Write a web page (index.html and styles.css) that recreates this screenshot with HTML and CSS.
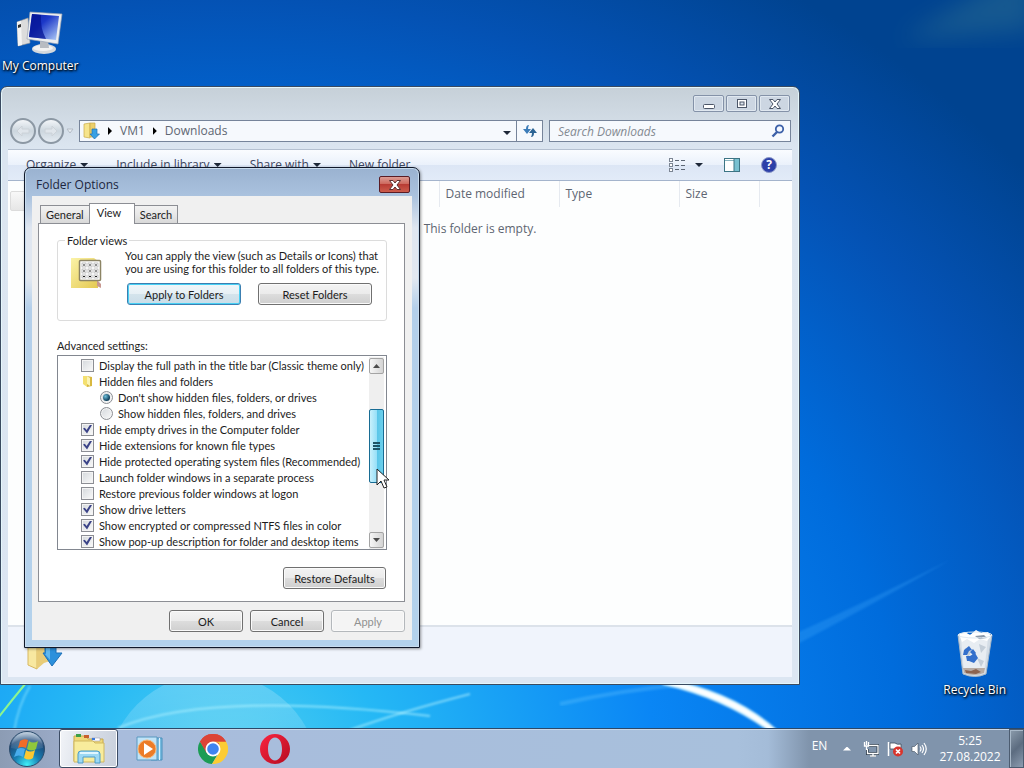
FILE: index.html
```html
<!DOCTYPE html>
<html lang="en">
<head>
    <meta charset="UTF-8">
    <meta name="viewport" content="width=device-width, initial-scale=1.0">
    <title>Folder Options</title>
    <link rel="stylesheet" href="styles.css">
</head>
<body>
    <main class="desktop">
        <!-- Wallpaper light streaks -->
        <svg class="wallpaper" viewBox="0 0 1024 768" preserveAspectRatio="none" aria-hidden="true">
            <defs>
                <filter id="soft"><feGaussianBlur stdDeviation="1"/></filter>
                <filter id="softer"><feGaussianBlur stdDeviation="12"/></filter>
                <linearGradient id="glow" x1="0" y1="0" x2="0" y2="1">
                    <stop offset="0" stop-color="#fff" stop-opacity=".22"/>
                    <stop offset=".5" stop-color="#fff" stop-opacity=".06"/>
                </linearGradient>
            </defs>
            <circle cx="213" cy="780" r="107" fill="url(#glow)"/>
            <path d="M900 40 L1034 -40 V30 Z" fill="#4a8a90" opacity=".3" filter="url(#softer)"/>
            <path d="M790 636 Q870 600 950 560 Q870 606 790 648Z" fill="#4ab0ff" opacity=".25" filter="url(#soft)"/>
            <path d="M560 704 Q620 690 690 684" fill="none" stroke="#6cc8ff" stroke-width="4" opacity=".3" filter="url(#soft)"/>
            <path d="M118 728 Q210 690 430 716" fill="none" stroke="#b8f4ff" stroke-width="2" opacity=".6" filter="url(#soft)"/>
            <path d="M350 730 Q400 712 470 694" fill="none" stroke="#b8f4ff" stroke-width="2" opacity=".6" filter="url(#soft)"/>
            <path d="M14 732 Q18 706 30 686" fill="none" stroke="#9cecff" stroke-width="2" opacity=".5" filter="url(#soft)"/>
            <path d="M-2 718 Q12 700 26 683" fill="none" stroke="#8cf590" stroke-width="2"/>
            <path d="M668 680 Q735 693 777 731 L770 731 Q725 698 664 684Z" fill="#fff" stroke="#d8f6ff" stroke-width="2" filter="url(#soft)"/>
        </svg>

        <a class="desktop-icon computer" href="#">
            <svg width="48" height="44" viewBox="0 0 48 44" aria-hidden="true">
                <defs>
                    <linearGradient id="screen" x1="0" y1="0" x2="1" y2="1">
                        <stop offset="0" stop-color="#0a1fa8"/><stop offset=".4" stop-color="#1c38c8"/><stop offset="1" stop-color="#b4d0f8"/>
                    </linearGradient>
                </defs>
                <path d="M1 12 L12 8 L14 33 L2 36Z" fill="#dcdcdc" stroke="#999" stroke-width=".6"/>
                <path d="M1 12 L5 11 L6 35 L2 36Z" fill="#f4f4f4"/>
                <path d="M2 15 l3 -1 v3 l-3 1z" fill="#333"/>
                <ellipse cx="28" cy="39" rx="12" ry="5" fill="#d4d8dc"/>
                <ellipse cx="27" cy="38" rx="10" ry="3" fill="#f2f2f2"/>
                <path d="M24 30 h8 l1 8 h-9z" fill="#b8bcc2"/>
                <path d="M14 2 L46 4 L42 34 L11 29Z" fill="#eceef0" stroke="#9aa4b4" stroke-width=".7"/>
                <path d="M16 4 L43 6 L40 30 L13 27Z" fill="url(#screen)"/>
                <path d="M16 4 L25 5 Q24 18 30 29 L13 27Z" fill="#041494" opacity=".75"/>
            </svg>
            <span>My Computer</span>
        </a>

        <a class="desktop-icon recycle" href="#">
            <svg width="40" height="48" viewBox="0 0 40 48" aria-hidden="true">
                <path d="M3 5 L8 44 Q20 49 31 44 L37 5Z" fill="#d4dde6" stroke="#a8b8c8"/>
                <path d="M6 8 L9 43 Q19 47 29 43 L33 8Z" fill="#e8edf2"/>
                <path d="M4 4 L10 2 L15 5 L21 0 L26 3 L33 2 L36 6 L32 11 L25 9 L19 13 L12 9 L7 12Z" fill="#fff"/>
                <path d="M20 6 l9 -1 3 3 -8 1z" fill="#8a98a8"/>
                <path d="M10 18 l6 4 -3 6zM24 14 l7 3 -5 6zM22 28 l7 3 -3 6z" fill="#c4ced8"/>
                <path d="M9 20 l5 -4 3 4 -3 1 -2 4 -4 0zM18 19 l3 4 -2 3 -4 -4zM15 26 l5 -3 3 5 -4 5 -5 -2zM11 26 l4 0 1 5 -4 0z" fill="#3470cc"/>
                <path d="M8 38 L30 38 L29 43 Q19 47 9 43Z" fill="#b8aca4"/>
                <path d="M10 40 l6 1 5 -2 5 3 -5 2 -10 -1z" fill="#8c6450"/>
                <ellipse cx="20" cy="5" rx="17" ry="3" fill="none" stroke="#dfe9f2"/>
            </svg>
            <span>Recycle Bin</span>
        </a>

        <section class="explorer" aria-label="Downloads">
            <div class="caption">
                <button class="cap-btn" aria-label="Minimize"><svg width="14" height="12" viewBox="0 0 14 12"><rect x="1.500" y="6.500" width="11" height="4" rx="1" fill="#fff" stroke="#4c5668"/></svg></button>
                <button class="cap-btn" aria-label="Restore"><svg width="12" height="12" viewBox="0 0 12 12"><rect x="1.500" y="1.500" width="9" height="8" fill="#fff" stroke="#4c5668"/><rect x="4" y="4" width="4" height="3" fill="#dde5ee" stroke="#4c5668"/></svg></button>
                <button class="cap-btn" aria-label="Close"><svg width="14" height="12" viewBox="0 0 14 12"><path d="M1.500 1.500h3.500l2 2.500 2-2.500h3.500L9 6l3.500 4.500H9L7 8l-2 2.500H1.500L5 6z" fill="#fff" stroke="#4c5668"/></svg></button>
            </div>

            <div class="nav-row">
                <div class="history">
                    <button class="round" aria-label="Back"><svg width="14" height="12" viewBox="0 0 14 12"><path d="M6 1L1 6l5 5V8h7V4H6z" fill="#dfe5eb" stroke="#ccd2d8"/></svg></button>
                    <button class="round" aria-label="Forward"><svg width="14" height="12" viewBox="0 0 14 12"><path d="M8 1l5 5-5 5V8H1V4h7z" fill="#dfe5eb" stroke="#ccd2d8"/></svg></button>
                    <svg width="8" height="6" viewBox="0 0 8 6" aria-hidden="true"><path d="M1 1h6L4 5z" fill="#e8edf2" stroke="#b4bcc6"/></svg>
                </div>
                <div class="address">
                    <svg width="18" height="18" viewBox="0 0 18 18" aria-hidden="true">
                        <path d="M2 2l6 -1v15l-6 -1z" fill="#f6e48c" stroke="#c8aa48" stroke-width=".7"/>
                        <path d="M8 1h5v14H8z" fill="#ecd06c" stroke="#c8aa48" stroke-width=".7"/>
                        <path d="M10 7h5v5h2.500L12.500 17 8 12h2z" fill="#38a0e4" stroke="#1c70b4" stroke-width=".7"/>
                    </svg>
                    <span class="tri-right"></span>
                    <a href="#">VM1</a>
                    <span class="tri-right"></span>
                    <a href="#">Downloads</a>
                    <button class="drop" aria-label="Previous locations"><span class="tri-down"></span></button>
                    <button class="refresh" aria-label="Refresh">
                        <svg width="16" height="14" viewBox="0 0 16 14"><path d="M7 1Q4 1 4 5H1l4 5 4-5H6q0-2 1-4z" fill="#3c7cb8"/><path d="M9 13q3 0 3-4h3l-4-5-4 5h3q0 2-1 4z" fill="#2c6494"/></svg>
                    </button>
                </div>
                <div class="search">
                    <input type="text" aria-label="Search Downloads" placeholder="Search Downloads">
                    <svg width="14" height="14" viewBox="0 0 14 14" aria-hidden="true"><circle cx="8.500" cy="5" r="3.700" fill="#f4f8ff" stroke="#3c60a8" stroke-width="1.800"/><path d="M6 8L1.500 12.500" stroke="#3c60a8" stroke-width="2.400"/></svg>
                </div>
            </div>

            <div class="content">
                <div class="toolbar">
                    <button class="tool">Organize <span class="tri-down"></span></button>
                    <button class="tool">Include in library <span class="tri-down"></span></button>
                    <button class="tool">Share with <span class="tri-down"></span></button>
                    <button class="tool">New folder</button>
                    <div class="tool-icons">
                        <button class="tool-icon" aria-label="Change your view">
                            <svg width="16" height="14" viewBox="0 0 16 14"><g fill="#fff" stroke="#7c8694"><rect x=".5" y=".5" width="3" height="3"/><rect x=".5" y="5.500" width="3" height="3"/><rect x=".5" y="10.500" width="3" height="3"/></g><path d="M6 2.500h4M12 2.500h4M6 7.500h4M12 7.500h4M6 11.500h4M12 11.500h4" stroke="#5c6674"/></svg>
                            <span class="tri-down"></span>
                        </button>
                        <button class="tool-icon" aria-label="Show the preview pane">
                            <svg width="16" height="14" viewBox="0 0 16 14"><rect x=".5" y=".5" width="15" height="13" fill="#fff" stroke="#3c7484"/><path d="M1 2.500h9" stroke="#88b4c0"/><rect x="10" y="1" width="5" height="12" fill="#78c0d0"/><path d="M10 1v12" stroke="#3c7484"/></svg>
                        </button>
                        <button class="tool-icon help" aria-label="Get help">?</button>
                    </div>
                </div>
                <div class="panes">
                    <nav class="tree"><div class="tree-item"></div></nav>
                    <table class="files">
                        <thead>
                            <tr>
                                <th class="col-name"></th>
                                <th class="col-wide">Date modified</th>
                                <th class="col-wide">Type</th>
                                <th class="col-size">Size</th>
                                <th></th>
                            </tr>
                        </thead>
                        <tbody>
                            <tr><td colspan="5">This folder is empty.</td></tr>
                        </tbody>
                    </table>
                </div>
                <div class="details">
                    <svg width="40" height="40" viewBox="0 0 40 40" aria-hidden="true">
                        <path d="M2 4l9 -2v36l-9 -4z" fill="#f8e8a0" stroke="#d8b860"/>
                        <path d="M11 2h13v28l-6 2-7 6z" fill="#e8cc78"/>
                        <path d="M19 8h11v14h6L26 35 17 22h2z" fill="#2c90dc" stroke="#1c70b8"/>
                        <path d="M20 9h4v20l-5 -6h1z" fill="#60b8f0"/>
                    </svg>
                </div>
            </div>
        </section>

        <section class="dialog" role="dialog" aria-labelledby="dialogTitle">
            <header class="dialog-title">
                <h1 id="dialogTitle">Folder Options</h1>
                <button class="dialog-close" aria-label="Close"><svg width="14" height="12" viewBox="0 0 14 12"><path d="M1.500 1.500h3.500l2 2.500 2-2.500h3.500L9 6l3.500 4.500H9L7 8l-2 2.500H1.500L5 6z" fill="#fff" stroke="#5c3030"/></svg></button>
            </header>

            <div class="dialog-body">
                <div class="tabs" role="tablist">
                    <button class="tab" role="tab">General</button>
                    <button class="tab active" role="tab" aria-selected="true">View</button>
                    <button class="tab" role="tab">Search</button>
                </div>

                <div class="tab-page">
                    <fieldset>
                        <legend>Folder views</legend>
                        <svg width="34" height="34" viewBox="0 0 34 34" aria-hidden="true">
                            <defs><linearGradient id="paper" x1="0" y1="0" x2="1" y2="1"><stop offset="0" stop-color="#fbf3a8"/><stop offset="1" stop-color="#e4c850"/></linearGradient></defs>
                            <path d="M1 1h23l4 3v27H1z" fill="url(#paper)"/>
                            <path d="M27 23l4 4v4l-4 -2z" fill="#c89890"/>
                            <rect x="9.500" y="3.500" width="21" height="20" rx="1" fill="#fff" stroke="#8c8464" stroke-width="1.500"/>
                            <g fill="#fff" stroke="#999" stroke-width=".6"><rect x="12" y="6" width="4" height="4"/><rect x="18" y="6" width="4" height="4"/><rect x="24" y="6" width="4" height="4"/><rect x="12" y="12" width="4" height="4"/><rect x="18" y="12" width="4" height="4"/><rect x="24" y="12" width="4" height="4"/><rect x="12" y="18" width="4" height="3"/><rect x="18" y="18" width="4" height="3"/><rect x="24" y="18" width="4" height="3"/></g>
                            <path d="M13 8h2M19 8h2M25 8h2M13 14h2M19 14h2M25 14h2M13 19.500h2M19 19.500h2M25 19.500h2" stroke="#222" stroke-width="1.200"/>
                        </svg>
                        <div class="views">
                            <p>You can apply the view (such as Details or Icons) that<br>you are using for this folder to all folders of this type.</p>
                            <div class="view-buttons">
                                <button class="btn focused">Apply to Folders</button>
                                <button class="btn">Reset Folders</button>
                            </div>
                        </div>
                    </fieldset>

                    <h2>Advanced settings:</h2>
                    <div class="settings">
                        <ul>
                            <li><label><input type="checkbox">Display the full path in the title bar (Classic theme only)</label></li>
                            <li class="group">
                                <svg width="13" height="13" viewBox="0 0 13 13" aria-hidden="true"><path d="M2 1l4 0v11l-4 -3z" fill="#f4e070"/><path d="M6 1l5 1v9l-5 1z" fill="#d8b840"/><path d="M6 1v8l3 2V3z" fill="#fbf4b4"/></svg>
                                Hidden files and folders
                            </li>
                            <li class="sub"><label><input type="radio" name="hidden" checked>Don't show hidden files, folders, or drives</label></li>
                            <li class="sub"><label><input type="radio" name="hidden">Show hidden files, folders, and drives</label></li>
                            <li><label><input type="checkbox" checked>Hide empty drives in the Computer folder</label></li>
                            <li><label><input type="checkbox" checked>Hide extensions for known file types</label></li>
                            <li><label><input type="checkbox" checked>Hide protected operating system files (Recommended)</label></li>
                            <li><label><input type="checkbox">Launch folder windows in a separate process</label></li>
                            <li><label><input type="checkbox">Restore previous folder windows at logon</label></li>
                            <li><label><input type="checkbox" checked>Show drive letters</label></li>
                            <li><label><input type="checkbox" checked>Show encrypted or compressed NTFS files in color</label></li>
                            <li><label><input type="checkbox" checked>Show pop-up description for folder and desktop items</label></li>
                        </ul>
                        <div class="scrollbar">
                            <button class="scroll-btn" aria-label="Scroll up"><span class="tri-up"></span></button>
                            <div class="track"><div class="thumb"><span></span><span></span><span></span></div></div>
                            <button class="scroll-btn" aria-label="Scroll down"><span class="tri-down"></span></button>
                        </div>
                    </div>
                    <div class="restore"><button class="btn">Restore Defaults</button></div>
                </div>

                <div class="dialog-buttons">
                    <button class="btn">OK</button>
                    <button class="btn">Cancel</button>
                    <button class="btn" disabled>Apply</button>
                </div>
            </div>
        </section>

        <svg class="cursor" width="14" height="22" viewBox="0 0 14 22" aria-hidden="true"><path d="M1 1v16l4-4 3 7 3-1-3-7h5z" fill="#fff" stroke="#222"/></svg>
    </main>

    <footer class="taskbar">
        <button class="start" aria-label="Start">
            <svg width="38" height="38" viewBox="0 0 38 38">
                <defs>
                    <radialGradient id="orb" cx=".5" cy=".95" r=".9"><stop offset="0" stop-color="#40f0f8"/><stop offset=".4" stop-color="#1880b4"/><stop offset=".8" stop-color="#1c4878"/><stop offset="1" stop-color="#88a4c0"/></radialGradient>
                    <linearGradient id="shine" x1="0" y1="0" x2="0" y2="1"><stop offset="0" stop-color="#fff" stop-opacity=".7"/><stop offset="1" stop-color="#fff" stop-opacity=".1"/></linearGradient>
                </defs>
                <circle cx="19" cy="19" r="17.500" fill="url(#orb)" stroke="#2c4c6c"/>
                <path d="M3 18a16 16 0 0 1 32 0q-16 4-32 0z" fill="url(#shine)" opacity=".6"/>
                <path d="M12 11q4-3 8-1l-2 8q-4-2-8 0z" fill="#f06c28"/>
                <path d="M21 11q4 3 9 0l-2 8q-4 3-9 0z" fill="#90c83c"/>
                <path d="M9 19q4-2 8 0l-2 8q-4-3-9 0z" fill="#48acec"/>
                <path d="M18 20q4 3 9 0l-2 8q-4 3-9 0z" fill="#fcc830"/>
            </svg>
        </button>
        <button class="task active" aria-label="Windows Explorer">
            <svg width="34" height="32" viewBox="0 0 34 32">
                <path d="M2 3h12l2 3h15v22H2z" fill="#f0d878" stroke="#c8a848"/>
                <path d="M4 1h5v3H4z" fill="#3ca048"/><path d="M12 2h5v3h-5z" fill="#c8602c"/><path d="M20 5h8v3h-8z" fill="#fff" stroke="#88a" stroke-width=".5"/><path d="M20 5h3v2h-3z" fill="#3c78d8"/>
                <path d="M2 8h19l2 2h9v19H2z" fill="#f8ec9c" stroke="#d0b860"/>
                <path d="M6 30v-9q0-3 3-3h16q3 0 3 3v9h-5v-6H11v6z" fill="#9cd8f4" stroke="#4c9cc8"/>
                <path d="M8 20h18" stroke="#e0f6ff" stroke-width="2"/>
            </svg>
        </button>
        <button class="task" aria-label="Windows Media Player">
            <svg width="30" height="26" viewBox="0 0 30 26">
                <path d="M15 2h11v22H15z" fill="#78bce0" stroke="#4890bc"/><path d="M23.500 2v22" stroke="#e0f4ff"/>
                <path d="M1 1h20v23H1z" fill="#c0e4f8" stroke="#5898c0"/>
                <circle cx="11" cy="13" r="9" fill="#ec7c28" stroke="#f8b878"/>
                <path d="M8 7l9 6-9 6z" fill="#fff"/>
            </svg>
        </button>
        <button class="task" aria-label="Google Chrome">
            <svg width="30" height="30" viewBox="0 0 30 30">
                <path d="M2 7.500A15 15 0 0 1 28 7.500L21 15H9z" fill="#dc4437"/>
                <path d="M2 7.500A15 15 0 0 0 14 30L21 18 15 22 9 18z" fill="#1c9c54"/>
                <path d="M28 7.500A15 15 0 0 1 14 30L21.500 18 21 9 15 7.500z" fill="#fccc34"/>
                <path d="M2 7.500A15 15 0 0 1 28 7.500H15L8.500 19z" fill="#dc4437"/>
                <circle cx="15" cy="15" r="7.500" fill="#fff"/><circle cx="15" cy="15" r="5.800" fill="#4084f0"/>
            </svg>
        </button>
        <button class="task" aria-label="Opera">
            <svg width="30" height="30" viewBox="0 0 30 30">
                <defs><linearGradient id="op" x1="0" y1="0" x2="1" y2="1"><stop offset="0" stop-color="#fc2440"/><stop offset="1" stop-color="#b40c20"/></linearGradient></defs>
                <path fill-rule="evenodd" d="M15 0a15 15 0 1 0 0 30a15 15 0 1 0 0-30zM15 3.500c4.500 0 7 5 7 11.500S19.500 26.500 15 26.500S8 21.500 8 15S10.500 3.500 15 3.500z" fill="url(#op)"/>
            </svg>
        </button>

        <div class="tray">
            <button class="tray-item lang">EN</button>
            <button class="tray-item" aria-label="Show hidden icons"><span class="tri-up"></span></button>
            <button class="tray-item" aria-label="Network">
                <svg width="16" height="16" viewBox="0 0 16 16"><path d="M6 4.500h9v8H4.500V8M7 15h6M10 12v3" fill="none" stroke="#2c3c4c" stroke-width="3"/><path d="M6 4.500h9v8H4.500V8M7 15h6M10 12v3M1.500 1v4h4V1M3.500 0v4M3.500 5v4" fill="none" stroke="#fff" stroke-width="1.300"/></svg>
            </button>
            <button class="tray-item" aria-label="Action Center">
                <svg width="17" height="16" viewBox="0 0 17 16"><path d="M1.500 1v14M3 2h5q2 2 6 1v6q-4 1-6-1H3z" fill="#fff" stroke="#3c4c5c" stroke-width=".8"/><path d="M1.500 1v14" stroke="#fff" stroke-width="1.500"/><circle cx="11" cy="10.500" r="5" fill="#d8342c"/><path d="M9 8.500l4 4M13 8.500l-4 4" stroke="#fff" stroke-width="1.700"/></svg>
            </button>
            <button class="tray-item" aria-label="Volume">
                <svg width="16" height="14" viewBox="0 0 16 14"><path d="M1 4.500h2.500L7 1v12L3.500 9.500H1z" fill="#fff" stroke="#3c4c5c" stroke-width=".6"/><path d="M9 4.500q2 2.500 0 5M11 3q3 4 0 8M13 1q4.500 6 0 12" fill="none" stroke="#fff" stroke-width="1.200"/></svg>
            </button>
            <button class="clock"><span>5:25</span><span>27.08.2022</span></button>
            <button class="show-desktop" aria-label="Show desktop"></button>
        </div>
    </footer>
</body>
</html>
```

FILE: styles.css
```css
* {
    box-sizing: border-box;
}

body {
    margin: 0;
    min-height: 100vh;
    display: flex;
    flex-direction: column;
    font-family: "Open Sans", "Noto Sans", sans-serif;
    font-size: 12px;
    line-height: 16px;
    overflow: hidden;
    background: radial-gradient(ellipse 105% 122% at 22% 100%, #50d0f0 0%, #25b8f5 15%, #0a86f5 40%, #006cdc 63%, #0452b4 82%, #004390 98%);
}

button {
    margin: 0;
    padding: 0;
    border: none;
    background: none;
    font: inherit;
    color: inherit;
}

a {
    color: inherit;
    text-decoration: none;
}

.desktop {
    flex: 1;
    position: relative;
}

.wallpaper {
    position: absolute;
    left: 0;
    top: 0;
    width: 100vw;
    height: 100vh;
}

.desktop-icon {
    position: absolute;
    display: flex;
    flex-direction: column;
    align-items: center;
    gap: 4px;
    color: #fff;
    text-shadow: 1px 1px 2px #000, 0 1px 3px #000;
    white-space: nowrap;
}

.computer {
    left: 2px;
    top: 10px;
}

.recycle {
    right: 18px;
    top: 630px;
}

.tri-down, .tri-up, .tri-right {
    display: inline-block;
    width: 8px;
    height: 4px;
    background: #1e2838;
    clip-path: polygon(0 0, 100% 0, 50% 100%);
}

.tri-up {
    clip-path: polygon(0 100%, 100% 100%, 50% 0);
}

.tri-right {
    width: 4px;
    height: 8px;
    background: #000;
    clip-path: polygon(0 0, 100% 50%, 0 100%);
}

/* Explorer window */
.explorer {
    position: absolute;
    left: 0;
    right: 224px;
    top: 86px;
    bottom: 43px;
    display: flex;
    flex-direction: column;
    padding: 0 7px 7px;
    border: 1px solid #3a4a60;
    border-radius: 7px 7px 0 0;
    background: linear-gradient(#c6d0d8, #dbe5f0 60px, #dce6f2);
    box-shadow: inset 0 0 0 1px #e4f6fb;
    color: #5e6672;
}

.caption {
    display: flex;
    justify-content: flex-end;
    gap: 2px;
    padding: 8px 2px 0;
}

.cap-btn {
    width: 31px;
    height: 17px;
    border: 1px solid #8492a8;
    border-radius: 2px;
    background: #ccd6e2;
    box-shadow: inset 0 0 0 1px #e0e8f0;
    display: flex;
    align-items: center;
    justify-content: center;
}

.nav-row {
    display: flex;
    align-items: center;
    padding: 6px 1px 5px 2px;
}

.history {
    display: flex;
    align-items: center;
    gap: 2px;
    width: 69px;
}

.round {
    width: 26px;
    height: 26px;
    border: 2px solid #8c98a4;
    border-radius: 50%;
    background: linear-gradient(#f2f5f8, #ccd6de 50%, #e4ebf2);
    display: flex;
    align-items: center;
    justify-content: center;
}

.address, .search {
    display: flex;
    align-items: center;
    height: 22px;
    border: 1px solid #76849a;
    background: #f6f9fd;
}

.address {
    flex: 1;
    gap: 8px;
    padding-left: 2px;
}

.address .drop {
    margin-left: auto;
    margin-right: -3px;
}

.refresh {
    align-self: stretch;
    width: 26px;
    border-left: 1px solid #76849a;
    display: flex;
    align-items: center;
    justify-content: center;
}

.search {
    width: 242px;
    margin-left: 6px;
    padding: 0 5px 0 8px;
}

.search input {
    flex: 1;
    min-width: 0;
    padding: 0;
    border: none;
    outline: none;
    background: none;
    font: italic 12px "Open Sans", sans-serif;
}

.search input::placeholder {
    color: #848a92;
}

.content {
    flex: 1;
    display: flex;
    flex-direction: column;
    background: #fdfefe;
}

.toolbar {
    display: flex;
    align-items: center;
    gap: 28px;
    height: 32px;
    padding: 0 15px 0 18px;
    border-top: 1px solid #b4c0d0;
    border-bottom: 1px solid #a4b4cc;
    background: linear-gradient(#fafcff, #eaf1fb 50%, #dce6f5 50%, #e2ebf8);
    color: #3c4660;
}

.tool, .tool-icon {
    display: flex;
    align-items: center;
    gap: 4px;
}

.tool-icons {
    display: flex;
    align-items: center;
    gap: 21px;
    margin-left: auto;
}

.tool-icon {
    gap: 10px;
}

.help {
    width: 16px;
    height: 16px;
    border: 1px solid #8c98c8;
    border-radius: 50%;
    background: #2c40a8;
    color: #fff;
    font-weight: bold;
    justify-content: center;
}

.panes {
    flex: 1;
    display: flex;
}

.tree {
    width: 160px;
    padding: 10px 2px;
}

.tree-item {
    height: 20px;
    border: 1px solid #dcdcdc;
    border-radius: 2px;
    background: linear-gradient(#f8f8f8, #e6e6e6);
}

.files {
    flex: 1;
    align-self: flex-start;
    border-collapse: collapse;
    table-layout: fixed;
}

.files th {
    height: 26px;
    padding: 0 6px;
    border-right: 1px solid #e6eaf0;
    font-weight: normal;
    text-align: left;
}

.files th:last-child {
    border-right: none;
}

.col-name {
    width: 271px;
}

.col-wide {
    width: 120px;
}

.col-size {
    width: 80px;
}

.files td {
    padding: 14px 0;
    text-align: center;
}

.details {
    height: 52px;
    padding: 4px 18px;
    border-top: 2px solid #dce2ea;
    background: #f0f4fc;
}

/* Folder Options dialog */
.dialog {
    position: absolute;
    left: 24px;
    top: 167px;
    width: 396px;
    padding: 0 7px 7px;
    border: 1px solid #10182a;
    border-radius: 7px 7px 0 0;
    background: linear-gradient(#9ab2d0, #aac2de 28px, #dfe6f0 60px, #e2e8f0 110px, #b4cfea 140px, #b4d2ec);
    box-shadow: inset 0 0 0 1px #c8dcee, 1px 1px 3px rgba(0, 0, 0, 0.4);
    color: #1c1c1c;
    font-family: Lato, "Liberation Sans", sans-serif;
    font-size: 11px;
    line-height: 13px;
}

.dialog-title {
    display: flex;
    justify-content: space-between;
    align-items: flex-start;
    height: 28px;
    padding: 8px 2px 0 4px;
}

.dialog-title h1 {
    margin: 0;
    font: 12px/18px "Open Sans", "Noto Sans", sans-serif;
    color: #1c2640;
}

.dialog-close {
    width: 31px;
    height: 17px;
    border: 1px solid #5a1c24;
    border-radius: 2px;
    background: linear-gradient(#dc9c94, #cc6458 50%, #b83c34 50%, #cc5c4c);
    display: flex;
    align-items: center;
    justify-content: center;
}

.dialog-body {
    padding: 7px 7px 8px 6px;
    background: #f0f0f0;
}

.tabs {
    display: flex;
    align-items: flex-end;
    padding-left: 2px;
}

.tab {
    height: 18px;
    padding: 0 5px;
    border: 1px solid #8c8e94;
    border-bottom: none;
    background: linear-gradient(#f2f2f2, #e8e8e8 50%, #d8d8d8);
    margin-right: -1px;
}

.tab.active {
    z-index: 1;
    height: 21px;
    width: 46px;
    padding: 0 9px 3px 7px;
    margin-bottom: -1px;
    background: #fff;
    text-align: left;
}

.tab-page {
    padding: 10px 17px 12px 18px;
    border: 1px solid #8c8e94;
    background: #fff;
}

fieldset {
    display: flex;
    gap: 21px;
    min-width: 0;
    margin: 0;
    padding: 2px 6px 15px 12px;
    border: 1px solid #dcdcdc;
    border-radius: 3px;
}

fieldset > svg {
    flex: none;
    margin-top: 8px;
}

legend {
    margin-left: -5px;
    padding: 0 2px;
}

.views p {
    margin: 0 0 8px;
    white-space: nowrap;
}

.view-buttons {
    display: flex;
    gap: 17px;
    padding-left: 2px;
}

.btn {
    width: 74px;
    height: 22px;
    border: 1px solid #707070;
    border-radius: 3px;
    background: linear-gradient(#f3f3f3, #ebebeb 50%, #dddddd 50%, #cfcfcf);
    box-shadow: inset 0 0 0 1px #fafafa;
}

.view-buttons .btn {
    width: 114px;
}

.btn.focused {
    border-color: #3c7fb1;
    background: linear-gradient(#f0f6f9, #e6f0f5 50%, #d4e4ec 50%, #cadde8);
    box-shadow: inset 0 0 0 1px #48d0f4;
}

.btn:disabled {
    border-color: #b4b8bc;
    background: #f4f4f4;
    color: #909090;
}

.tab-page h2 {
    margin: 18px 0 3px;
    font-size: 11px;
    font-weight: normal;
}

.settings {
    display: flex;
    border: 1px solid #828790;
    padding: 1px 2px 0 0;
}

.settings ul {
    flex: 1;
    margin: 0;
    padding: 0 0 0 23px;
    list-style: none;
    white-space: nowrap;
}

.settings li, .settings label {
    display: flex;
    align-items: center;
    gap: 5px;
    height: 16px;
}

.settings .sub {
    padding-left: 19px;
}

.settings input {
    appearance: none;
    width: 13px;
    height: 13px;
    margin: 0;
    border: 1px solid #8c8e94;
    background: linear-gradient(135deg, #d4d8dc, #fafafa);
    box-shadow: inset 0 0 0 1px #f4f4f4;
    display: grid;
    place-items: center;
}

.settings input[type="radio"] {
    border-radius: 50%;
}

.settings input[type="checkbox"]:checked::before {
    content: "";
    width: 9px;
    height: 9px;
    background: #3c4488;
    clip-path: polygon(0 45%, 20% 35%, 40% 62%, 80% 0, 100% 5%, 45% 100%);
}

.settings input[type="radio"]:checked::before {
    content: "";
    width: 7px;
    height: 7px;
    border-radius: 50%;
    background: radial-gradient(circle at 35% 35%, #70c0dc, #0c3c58 70%);
}

.scrollbar {
    display: flex;
    flex-direction: column;
    width: 15px;
    padding: 1px 0;
    background: #efefef;
}

.scroll-btn {
    height: 16px;
    border: 1px solid #a4a4a4;
    border-radius: 2px;
    background: linear-gradient(90deg, #f6f6f6, #d4d4d4);
    display: flex;
    align-items: center;
    justify-content: center;
}

.scroll-btn .tri-up, .scroll-btn .tri-down {
    width: 7px;
    background: #4c4c4c;
}

.track {
    flex: 1;
    display: flex;
    flex-direction: column;
    padding: 35px 0 49px;
}

.thumb {
    flex: 1;
    display: flex;
    flex-direction: column;
    align-items: center;
    justify-content: center;
    gap: 1px;
    border: 1px solid #186c94;
    border-radius: 2px;
    background: linear-gradient(90deg, #c8f0fc, #98e0f8 50%, #58c4e8 50%, #6cd0ec);
}

.thumb span {
    width: 7px;
    height: 2px;
    background: #1c5468;
}

.restore {
    display: flex;
    justify-content: flex-end;
    padding: 17px 1px 0 0;
}

.restore .btn {
    width: 103px;
}

.dialog-buttons {
    display: flex;
    justify-content: flex-end;
    gap: 7px;
    padding-top: 8px;
}

.cursor {
    position: absolute;
    left: 376px;
    top: 468px;
}

/* Taskbar */
.taskbar {
    position: relative;
    display: flex;
    height: 40px;
    border-top: 1px solid #2c4868;
    background: linear-gradient(90deg, #8c9cb4, #98a8c4 50px, #a8bcdc 120px, #a8c0dc 72%, #a4bcd8 75%, #8094ac 79%, #8094ac);
    box-shadow: inset 0 1px 0 #c8d8ea;
}

.start {
    width: 54px;
    margin-right: 5px;
    display: flex;
    align-items: center;
    justify-content: center;
}

.task {
    width: 59px;
    margin-right: 3px;
    border: 1px solid transparent;
    border-radius: 3px;
    display: flex;
    align-items: center;
    justify-content: center;
}

.task.active {
    border-color: #3c4c64;
    background: linear-gradient(100deg, #f2f4f8, #d4dae4 60%, #c8d0dc);
    box-shadow: inset 0 0 0 1px #fff;
}

.tray {
    display: flex;
    margin-left: auto;
    color: #fff;
}

.tray-item {
    width: 24px;
    display: flex;
    align-items: center;
    justify-content: center;
}

.tray-item .tri-up {
    background: #fff;
}

.lang {
    width: 31px;
    padding-bottom: 6px;
}

.clock {
    width: 78px;
    display: flex;
    flex-direction: column;
    align-items: center;
    justify-content: center;
}

.show-desktop {
    width: 15px;
    border: 1px solid #4c5c70;
    background: linear-gradient(135deg, #8c9cac, #5c6c80 50%, #8c9cb0);
    box-shadow: inset 1px 1px 0 #a8b8c8;
}
```
